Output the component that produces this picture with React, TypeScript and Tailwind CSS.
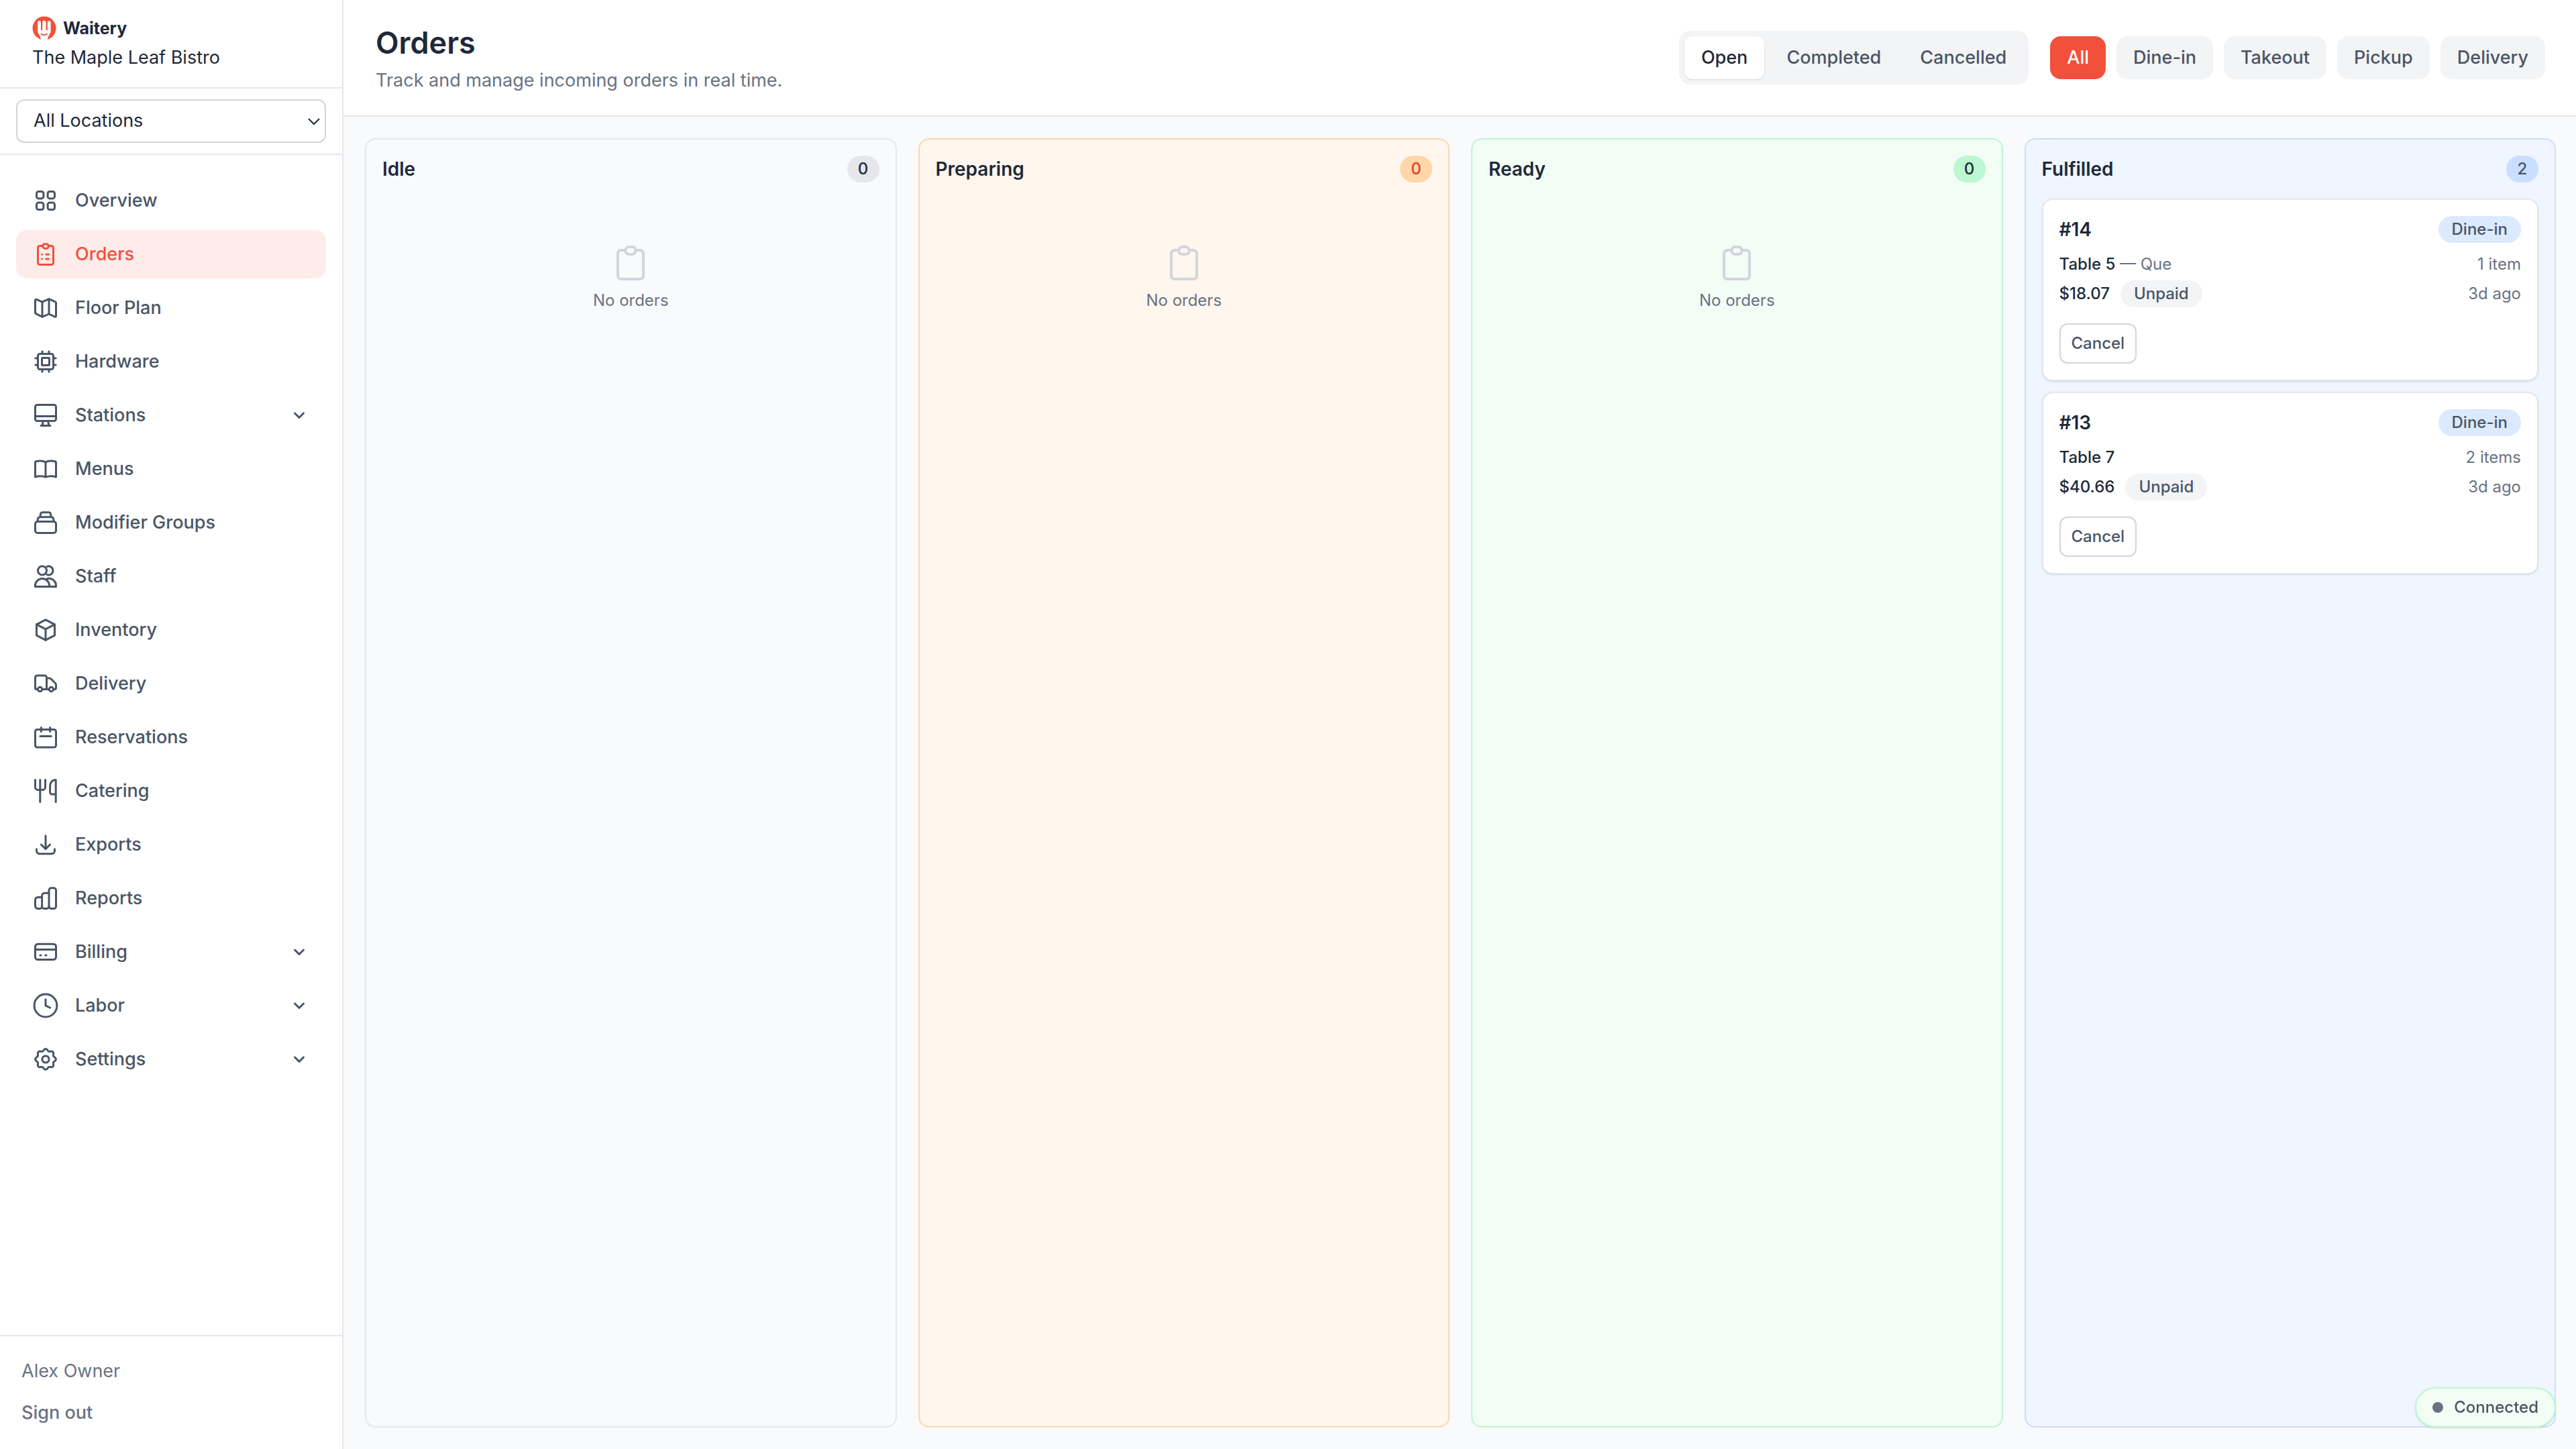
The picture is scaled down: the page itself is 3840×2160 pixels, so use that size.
import { useState, type ReactNode } from "react";

type IconProps = { className?: string; children: ReactNode };

function Icon({ className = "size-10", children }: IconProps) {
  return (
    <svg
      viewBox="0 0 20 20"
      className={`shrink-0 ${className}`}
      fill="none"
      stroke="currentColor"
      strokeWidth="1.5"
      strokeLinecap="round"
      strokeLinejoin="round"
      aria-hidden="true"
    >
      {children}
    </svg>
  );
}

const gearPath =
  Array.from({ length: 96 }, (_, i) => {
    const a = (i / 96) * Math.PI * 2;
    const r = 7 + 0.7 * Math.cos(8 * a);
    return `${i ? "L" : "M"}${(10 + r * Math.cos(a)).toFixed(2)} ${(10 + r * Math.sin(a)).toFixed(2)}`;
  }).join("") + "Z";

const icons: Record<string, ReactNode> = {
  Overview: (
    <>
      <rect x="3.25" y="3.25" width="5.2" height="5.2" rx="1.5" />
      <rect x="11.55" y="3.25" width="5.2" height="5.2" rx="1.5" />
      <rect x="3.25" y="11.55" width="5.2" height="5.2" rx="1.5" />
      <rect x="11.55" y="11.55" width="5.2" height="5.2" rx="1.5" />
    </>
  ),
  Orders: (
    <>
      <path d="M7.9 3.75H5.75a1.5 1.5 0 0 0-1.5 1.5v11a1.5 1.5 0 0 0 1.5 1.5h8.5a1.5 1.5 0 0 0 1.5-1.5v-11a1.5 1.5 0 0 0-1.5-1.5H12.1" />
      <rect x="7.85" y="2.35" width="4.3" height="3.35" rx="1.6" />
      <path d="M7.4 10.1h.01M7.4 13.5h.01" />
      <path d="M10.4 10.1h1.9M10.4 13.5h1.9" />
    </>
  ),
  "Floor Plan": (
    <path d="M7.5 5.6 3.2 3.7a.7.7 0 0 0-.95.65v9.1c0 .4.2.75.6.9L7.5 16.7l5-2.2 4.3 2.1a.66.66 0 0 0 .95-.6V6.3c0-.4-.2-.75-.6-.9L12.5 3.3zM7.5 5.6v11M12.5 3.4v11" />
  ),
  Hardware: (
    <>
      <rect x="4.25" y="4.25" width="11.5" height="11.5" rx="1.5" />
      <rect x="7.25" y="7.25" width="5.5" height="5.5" rx=".3" />
      <path d="M7.5 2.4v1.2M12.5 2.4v1.2M7.5 16.4v1.2M12.5 16.4v1.2M2.4 7.5h1.2M2.4 12.5h1.2M16.4 7.5h1.2M16.4 12.5h1.2" />
    </>
  ),
  Stations: (
    <>
      <rect x="2.25" y="2.25" width="15.5" height="12" rx="1.5" />
      <path d="M2.5 10.75h15M8.2 14.5l-.7 3M11.8 14.5l.7 3M6.5 17.75h7" />
    </>
  ),
  Menus: (
    <path d="M10 4.9C7.9 3.8 5.2 3.8 3 4.4a1 1 0 0 0-.75 1V16c2.5-.8 5.3-.8 7.75.1C12.4 15.2 15.2 15.2 17.75 16V5.4a1 1 0 0 0-.75-1C14.8 3.8 12.1 3.8 10 4.9zM10 4.9V16" />
  ),
  "Modifier Groups": (
    <>
      <rect x="2.25" y="9.25" width="15.5" height="8.5" rx="1.75" />
      <path d="M3.9 9l.2-1.5a1.9 1.9 0 0 1 1.9-1.65h8a1.9 1.9 0 0 1 1.9 1.65l.2 1.5" />
      <path d="M5.9 5.6l.35-2a1.5 1.5 0 0 1 1.5-1.25h4.5a1.5 1.5 0 0 1 1.5 1.25l.35 2" />
    </>
  ),
  Staff: (
    <>
      <circle cx="7.5" cy="5.8" r="3.25" />
      <path d="M11 2.8a3.25 3.25 0 1 1 0 6" />
      <path d="M2.25 17a5.25 5.25 0 0 1 10.5 0v.75h-10.5z" />
      <path d="M11 11.9a5.25 5.25 0 0 1 6.75 5.1v.75h-5" />
    </>
  ),
  Inventory: (
    <>
      <path d="M10 2.4l6.75 3.5v8.2L10 17.6l-6.75-3.5V5.9z" />
      <path d="M3.25 5.9L10 9.4l6.75-3.5M10 9.4v8.2" />
    </>
  ),
  Delivery: (
    <>
      <circle cx="5.8" cy="14.25" r="1.6" />
      <circle cx="14.2" cy="14.25" r="1.6" />
      <path d="M4 14.2H3.25a1 1 0 0 1-1-1V5.5A1.5 1.5 0 0 1 3.75 4h5.5a1.5 1.5 0 0 1 1.5 1.5v8.7M7.6 14.2h4.8M10.75 6h2a2 2 0 0 1 1.4.6l3 3a2 2 0 0 1 .6 1.4v2.2a1 1 0 0 1-1 1H16" />
    </>
  ),
  Reservations: (
    <>
      <rect x="2.25" y="4.25" width="15.5" height="13.3" rx="1.5" />
      <path d="M6.7 2.7v3M13.3 2.7v3M5.9 9.2h8.2" />
    </>
  ),
  Catering: (
    <>
      <path d="M2.25 1.7v5.5a2 2 0 0 0 2 2h3.5a2 2 0 0 0 2-2V1.7M5.9 1.7v16.6" />
      <path d="M17.6 18.3V1.7c-2.6 0-4.3 2-4.3 4.6v4.7a1.5 1.5 0 0 0 1.5 1.5h2.8" />
    </>
  ),
  Exports: (
    <>
      <path d="M10 3.4v9.8M6.7 10l3.3 3.3 3.3-3.3" />
      <path d="M3.25 13.4v1.1a2.4 2.4 0 0 0 2.4 2.4h8.7a2.4 2.4 0 0 0 2.4-2.4v-1.1" />
    </>
  ),
  Reports: (
    <>
      <path d="M7.25 9.25h-3a2 2 0 0 0-2 2v4.5a2 2 0 0 0 2 2h1.5a1.6 1.6 0 0 0 1.6-1.6" />
      <path d="M12.4 6.1h-3.1a2 2 0 0 0-2 2v8a1.6 1.6 0 0 0 1.6 1.6h2a1.6 1.6 0 0 0 1.6-1.6" />
      <rect x="12.5" y="2.4" width="5.25" height="15.3" rx="1.6" />
    </>
  ),
  Billing: (
    <>
      <rect x="2.25" y="4.1" width="15.5" height="11.7" rx="2" />
      <path d="M2.5 8.2h15M5.9 12.5h.6M9.9 12.5h.6" />
    </>
  ),
  Labor: (
    <>
      <circle cx="10" cy="10" r="8.45" />
      <path d="M10 5.4v4.7l3.3 1.5" />
    </>
  ),
  Settings: (
    <>
      <path d={gearPath} />
      <circle cx="10" cy="10" r="2.55" />
    </>
  ),
};

const navItems = [
  { label: "Overview" },
  { label: "Orders", active: true },
  { label: "Floor Plan" },
  { label: "Hardware" },
  { label: "Stations", expandable: true },
  { label: "Menus" },
  { label: "Modifier Groups" },
  { label: "Staff" },
  { label: "Inventory" },
  { label: "Delivery" },
  { label: "Reservations" },
  { label: "Catering" },
  { label: "Exports" },
  { label: "Reports" },
  { label: "Billing", expandable: true },
  { label: "Labor", expandable: true },
  { label: "Settings", expandable: true },
];

function NavItem({ label, active, expandable }: { label: string; active?: boolean; expandable?: boolean }) {
  const look = `flex h-18 w-full items-center gap-6 rounded-2xl px-6 text-left text-[27px] leading-10 font-medium ${
    active ? "bg-[#feecea] text-[#f2503a]" : "text-gray-600"
  }`;
  const inner = (
    <>
      <Icon>{icons[label]}</Icon>
      <span className="flex-1">{label}</span>
      {expandable && (
        <svg
          viewBox="0 0 32 32"
          className="size-8 shrink-0"
          fill="none"
          stroke="currentColor"
          strokeWidth="3"
          strokeLinecap="round"
          strokeLinejoin="round"
          aria-hidden="true"
        >
          <path d="M9.5 13l6.5 6.5 6.5-6.5" />
        </svg>
      )}
    </>
  );
  return (
    <li>
      {expandable ? (
        <button type="button" aria-expanded="false" className={look}>
          {inner}
        </button>
      ) : (
        <a href="#" aria-current={active ? "page" : undefined} className={look}>
          {inner}
        </a>
      )}
    </li>
  );
}

function Logo() {
  return (
    <svg viewBox="0 0 36 36" className="size-9 shrink-0" aria-hidden="true">
      <circle cx="18" cy="18" r="17.5" fill="#f2503a" />
      <path
        fill="#fff"
        d="M8.2 9.5a2.4 2.4 0 0 1 4.8 0v9.500a1.3 1.3 0 1 0 2.2 0V9.500a2.7 2.7 0 0 1 5.400 0v9.500a1.3 1.3 0 1 0 2.200 0V9.500a2.400 2.400 0 0 1 4.800 0v12.500c0 3-1.400 4.500-2.600 6.500-.9 1.700-1.900 4-2.200 7.500h-9.800c-.3-3.500-1.300-5.800-2.200-7.500-1.200-2-2.600-3.500-2.600-6.500z"
      />
      <path d="M13.7 26.7c2.4 2 6 2 8.400 0" fill="none" stroke="#f2503a" strokeWidth="2" strokeLinecap="round" />
    </svg>
  );
}

function Sidebar() {
  return (
    <aside className="flex w-[512px] shrink-0 flex-col border-r-2 border-gray-200 bg-white">
      <div className="flex h-[132px] flex-col border-b-2 border-gray-200 px-12 pt-6">
        <div className="flex h-9 items-center gap-2.5">
          <Logo />
          <span className="text-[25px] leading-9 font-bold text-gray-800">Waitery</span>
        </div>
        <p className="mt-1.5 text-[27px] leading-10 text-gray-800">The Maple Leaf Bistro</p>
      </div>
      <div className="border-b-2 border-gray-200 px-6 py-4">
        <div className="relative">
          <select
            aria-label="Location"
            className="block h-[65px] w-full appearance-none rounded-xl border-2 border-gray-300 bg-white px-6 text-[27px] text-gray-800"
          >
            <option>All Locations</option>
          </select>
          <svg
            viewBox="0 0 20 12"
            className="pointer-events-none absolute inset-y-0 right-2 my-auto h-3 w-5 text-gray-800"
            fill="none"
            stroke="currentColor"
            strokeWidth="2"
            aria-hidden="true"
          >
            <path d="M2 2l8 8 8-8" />
          </svg>
        </div>
      </div>
      <nav aria-label="Main" className="flex-1 px-6 py-8">
        <ul className="flex flex-col gap-2">
          {navItems.map((item) => (
            <NavItem key={item.label} {...item} />
          ))}
        </ul>
      </nav>
      <div className="flex flex-col items-start gap-[22px] border-t-2 border-gray-200 px-8 pt-8 pb-[34px] text-[27px] leading-10 text-gray-500">
        <p>Alex Owner</p>
        <button type="button" className="font-medium">
          Sign out
        </button>
      </div>
    </aside>
  );
}

const statuses = ["Open", "Completed", "Cancelled"];
const channels = ["All", "Dine-in", "Takeout", "Pickup", "Delivery"];

function Header() {
  const [status, setStatus] = useState("Open");
  const [channel, setChannel] = useState("All");
  return (
    <header className="flex h-[174px] items-center justify-between border-b-2 border-gray-200 bg-white pr-[46px] pl-12">
      <div>
        <h1 className="text-[45px] leading-16 font-semibold text-gray-800">Orders</h1>
        <p className="mt-1 text-[27px] leading-10 text-gray-500">Track and manage incoming orders in real time.</p>
      </div>
      <div className="flex items-center gap-8 text-[27px] leading-10 font-medium">
        <div className="flex gap-2 rounded-2xl bg-gray-100 p-2">
          {statuses.map((s) => (
            <button
              key={s}
              type="button"
              aria-pressed={s === status}
              onClick={() => setStatus(s)}
              className={`h-16 rounded-xl px-[25px] ${s === status ? "bg-white text-gray-800 shadow" : "text-gray-600"}`}
            >
              {s}
            </button>
          ))}
        </div>
        <div className="flex gap-4">
          {channels.map((c) => (
            <button
              key={c}
              type="button"
              aria-pressed={c === channel}
              onClick={() => setChannel(c)}
              className={`h-16 rounded-2xl px-[25px] ${c === channel ? "bg-[#f2503a] text-white" : "bg-gray-100 text-gray-600"}`}
            >
              {c}
            </button>
          ))}
        </div>
      </div>
    </header>
  );
}

type Order = { id: string; table: string; guest?: string; items: string; total: string; age: string };

const orders: Order[] = [
  { id: "#14", table: "Table 5", guest: "Que", items: "1 item", total: "$18.07", age: "3d ago" },
  { id: "#13", table: "Table 7", items: "2 items", total: "$40.66", age: "3d ago" },
];

function OrderCard({ order }: { order: Order }) {
  return (
    <article className="rounded-2xl border-2 border-gray-200 bg-white p-6 text-[24px] leading-8 text-gray-500 shadow">
      <div className="flex items-center justify-between">
        <h3 className="text-[28px] leading-10 font-semibold text-gray-800">{order.id}</h3>
        <span className="rounded-full bg-blue-100 px-5 py-1 font-medium text-gray-600">Dine-in</span>
      </div>
      <div className="mt-4 flex items-center justify-between">
        <p>
          <span className="font-medium text-gray-800">{order.table}</span>
          {order.guest && ` — ${order.guest}`}
        </p>
        <p>{order.items}</p>
      </div>
      <div className="mt-2 flex items-center justify-between">
        <div className="flex items-center gap-4 font-medium">
          <span className="text-gray-800">{order.total}</span>
          <span className="rounded-full bg-gray-100 px-5 py-1 text-gray-600">Unpaid</span>
        </div>
        <p>{order.age}</p>
      </div>
      <button type="button" className="mt-6 block h-15 rounded-xl border-2 border-gray-300 px-4 font-medium text-gray-600">
        Cancel
      </button>
    </article>
  );
}

const columns: { title: string; panel: string; badge: string; orders: Order[] }[] = [
  { title: "Idle", panel: "border-gray-200 bg-gray-50", badge: "bg-gray-200 text-gray-800", orders: [] },
  { title: "Preparing", panel: "border-[#ffd6a8] bg-[#fff6ed]", badge: "bg-[#ffd6a8] text-[#d9402c]", orders: [] },
  { title: "Ready", panel: "border-[#bbf7d0] bg-[#f2fdf5]", badge: "bg-[#bbf7d0] text-gray-800", orders: [] },
  { title: "Fulfilled", panel: "border-[#c9dfff] bg-[#eff6ff]", badge: "bg-[#c9dfff] text-gray-600", orders },
];

export default function App() {
  return (
    <div className="flex min-h-screen bg-gray-50 font-[Inter,sans-serif] antialiased">
      <Sidebar />
      <div className="flex min-w-0 flex-1 flex-col">
        <Header />
        <main className="grid flex-1 grid-cols-4 gap-8 py-8 pr-[30px] pl-8">
          {columns.map((col) => (
            <section key={col.title} aria-label={col.title} className={`rounded-2xl border-2 p-6 ${col.panel}`}>
              <div className="flex items-center justify-between">
                <h2 className="text-[28px] leading-10 font-semibold text-gray-800">{col.title}</h2>
                <span className={`min-w-12 rounded-full px-4 py-1 text-center text-[24px] leading-8 font-medium ${col.badge}`}>
                  {col.orders.length}
                </span>
              </div>
              {col.orders.length > 0 ? (
                <div className="mt-6 flex flex-col gap-4">
                  {col.orders.map((o) => (
                    <OrderCard key={o.id} order={o} />
                  ))}
                </div>
              ) : (
                <div className="mt-[88px] flex flex-col items-center gap-2">
                  <svg
                    viewBox="0 0 64 64"
                    className="size-16 text-gray-300"
                    fill="none"
                    stroke="currentColor"
                    strokeWidth="4"
                    strokeLinecap="round"
                    strokeLinejoin="round"
                    aria-hidden="true"
                  >
                    <path d="M24.5 13h-6.500a5 5 0 0 0-5 5v33a5 5 0 0 0 5 5h28a5 5 0 0 0 5-5V18a5 5 0 0 0-5-5h-6.500" />
                    <rect x="24.500" y="8" width="15" height="11" rx="5" />
                  </svg>
                  <p className="text-[24px] leading-8 text-gray-500">No orders</p>
                </div>
              )}
            </section>
          ))}
        </main>
      </div>
      <div
        role="status"
        className="fixed right-[30px] bottom-8 flex h-15 items-center gap-4 rounded-full border-2 border-[#bbf7d0] bg-[#f2fdf5] px-6 text-[24px] leading-8 font-medium text-gray-600 shadow-sm"
      >
        <span className="size-4 rounded-full bg-gray-500" />
        Connected
      </div>
    </div>
  );
}
